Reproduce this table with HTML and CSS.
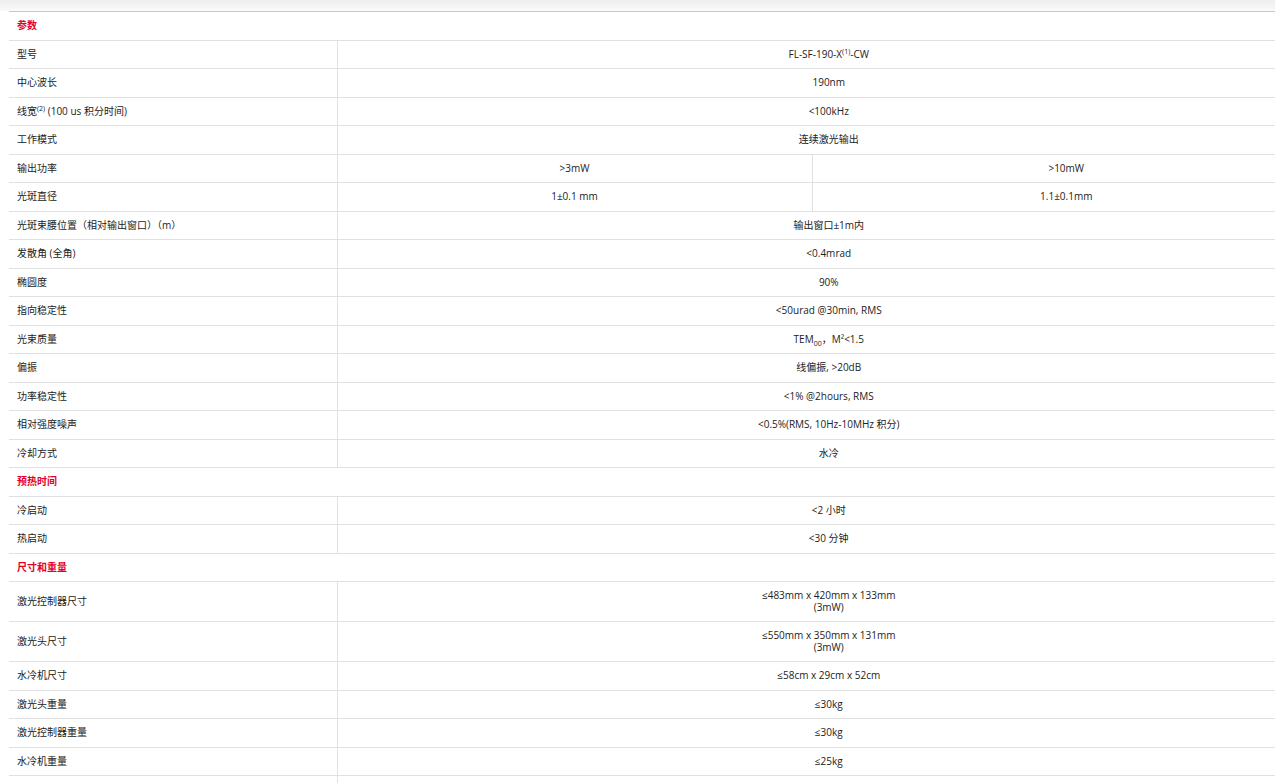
FILE: index.html
```html
<!DOCTYPE html>
<html lang="zh-CN">
<head>
    <meta charset="UTF-8">
    <meta name="viewport" content="width=device-width, initial-scale=1.0">
    <title>FL-SF-190 参数</title>
    <link rel="stylesheet" href="styles.css">
</head>
<body>
    <div class="top-shade"></div>
    <div class="spec-wrap">
        <table class="spec-table">
            <colgroup>
                <col class="col-name">
                <col class="col-a">
                <col class="col-b">
            </colgroup>
            <tbody>
                <tr class="section"><td colspan="3">参数</td></tr>
                <tr><td>型号</td><td colspan="2">FL-SF-190-X<sup>(1)</sup>-CW</td></tr>
                <tr><td>中心波长</td><td colspan="2">190nm</td></tr>
                <tr><td>线宽<sup>(2)</sup> (100 us 积分时间)</td><td colspan="2">&lt;100kHz</td></tr>
                <tr><td>工作模式</td><td colspan="2">连续激光输出</td></tr>
                <tr><td>输出功率</td><td>&gt;3mW</td><td>&gt;10mW</td></tr>
                <tr><td>光斑直径</td><td>1±0.1 mm</td><td>1.1±0.1mm</td></tr>
                <tr><td>光斑束腰位置（相对输出窗口）（m）</td><td colspan="2">输出窗口±1m内</td></tr>
                <tr><td>发散角 (全角)</td><td colspan="2">&lt;0.4mrad</td></tr>
                <tr><td>椭圆度</td><td colspan="2">90%</td></tr>
                <tr><td>指向稳定性</td><td colspan="2">&lt;50urad @30min, RMS</td></tr>
                <tr><td>光束质量</td><td colspan="2">TEM<sub>00</sub>，M²&lt;1.5</td></tr>
                <tr><td>偏振</td><td colspan="2">线偏振, &gt;20dB</td></tr>
                <tr><td>功率稳定性</td><td colspan="2">&lt;1% @2hours, RMS</td></tr>
                <tr><td>相对强度噪声</td><td colspan="2">&lt;0.5%(RMS, 10Hz-10MHz 积分)</td></tr>
                <tr><td>冷却方式</td><td colspan="2">水冷</td></tr>
                <tr class="section"><td colspan="3">预热时间</td></tr>
                <tr><td>冷启动</td><td colspan="2">&lt;2 小时</td></tr>
                <tr><td>热启动</td><td colspan="2">&lt;30 分钟</td></tr>
                <tr class="section"><td colspan="3">尺寸和重量</td></tr>
                <tr><td>激光控制器尺寸</td><td colspan="2">≤483mm x 420mm x 133mm<br>(3mW)</td></tr>
                <tr><td>激光头尺寸</td><td colspan="2">≤550mm x 350mm x 131mm<br>(3mW)</td></tr>
                <tr><td>水冷机尺寸</td><td colspan="2">≤58cm x 29cm x 52cm</td></tr>
                <tr><td>激光头重量</td><td colspan="2">≤30kg</td></tr>
                <tr><td>激光控制器重量</td><td colspan="2">≤30kg</td></tr>
                <tr><td>水冷机重量</td><td colspan="2">≤25kg</td></tr>
                <tr><td>&nbsp;</td><td colspan="2">&nbsp;</td></tr>
            </tbody>
        </table>
    </div>
</body>
</html>
```

FILE: styles.css
```css
* {
    margin: 0;
    padding: 0;
    box-sizing: border-box;
}
body {
    font-family: 'Open Sans', 'Noto Sans CJK SC', sans-serif;
    font-size: 10px;
    color: #222;
    background-color: #fff;
    overflow: hidden;
}
.top-shade {
    height: 11px;
    background: linear-gradient(#eeeeee, #fafafa);
}
.spec-wrap {
    padding-left: 9px;
}
.spec-table {
    width: 1311px;
    table-layout: fixed;
    border-collapse: collapse;
    border-top: 1px solid #c8c8c8;
}
.col-name {
    width: 328px;
}
.col-a {
    width: 475px;
}
.col-b {
    width: 508px;
}
.spec-table td {
    padding: 8px 8px;
    line-height: 11.5px;
    border-bottom: 1px solid #e0e0e0;
    border-left: 1px solid #e0e0e0;
    text-align: center;
    vertical-align: middle;
}
.spec-table td:first-child {
    border-left: none;
    text-align: left;
}
.section td {
    color: #e4002b;
    font-weight: bold;
}
sup, sub {
    font-size: 7px;
    line-height: 0;
}
```
